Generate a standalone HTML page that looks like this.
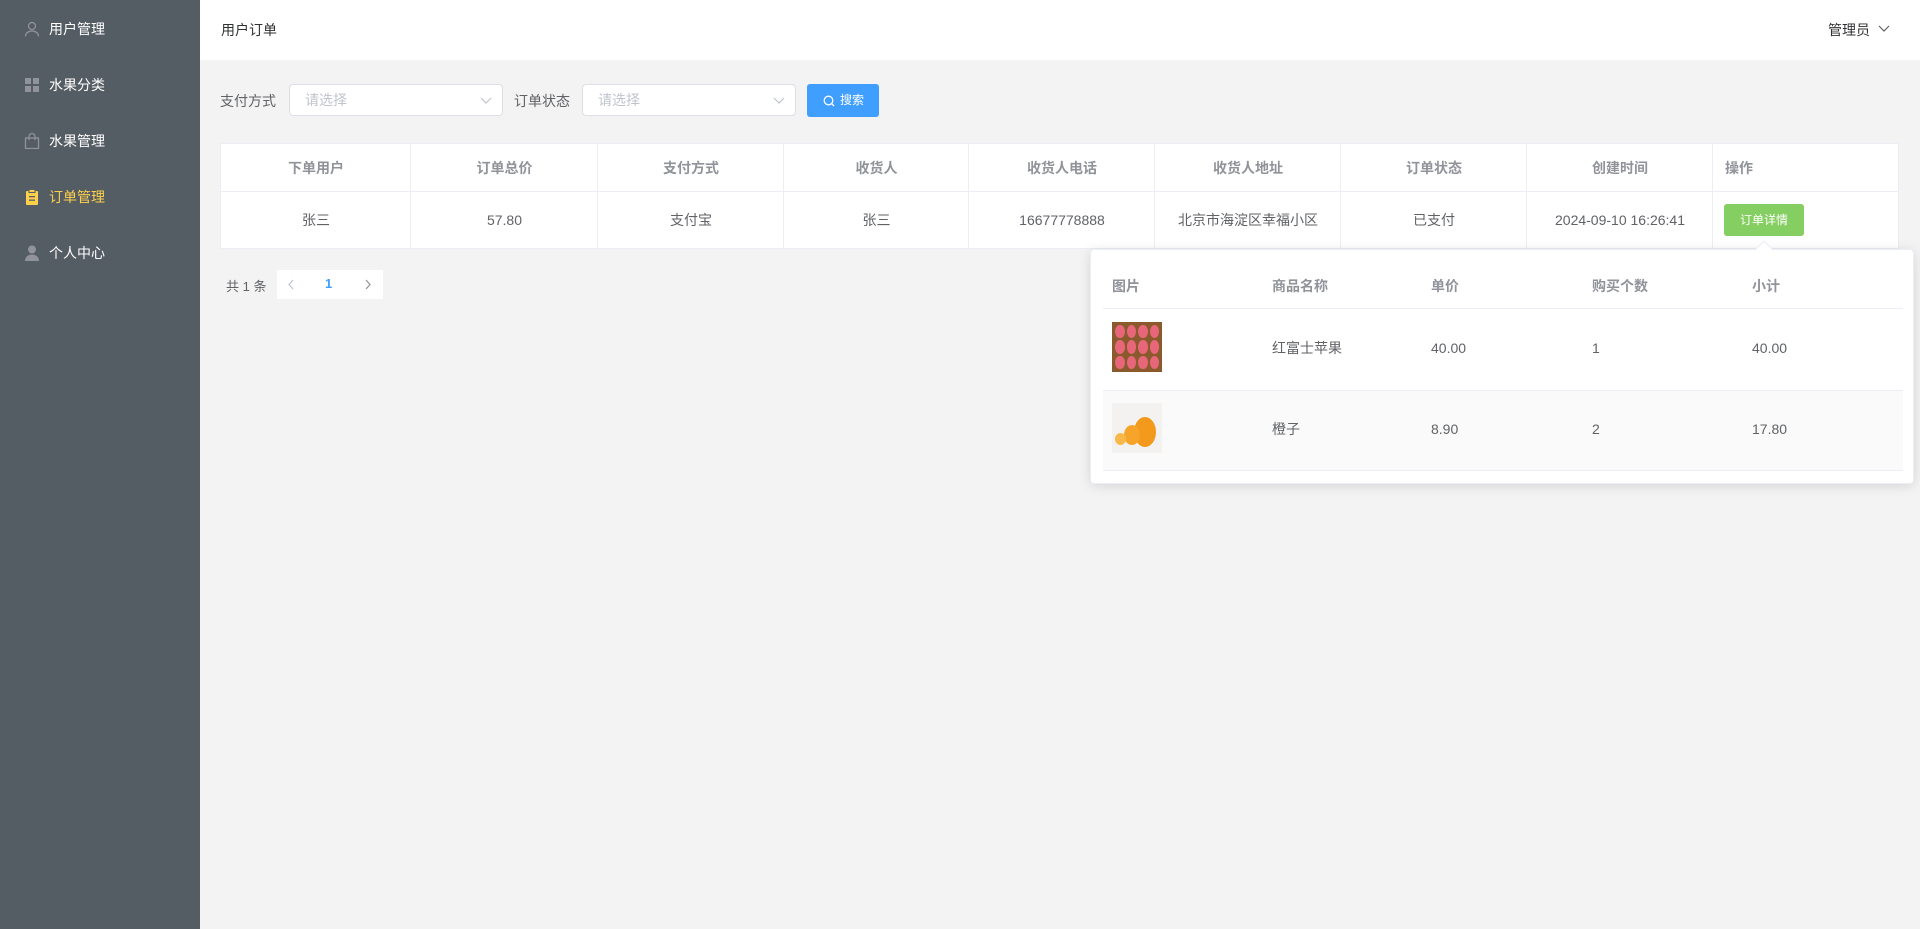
<!DOCTYPE html>
<html><head><meta charset="utf-8"><style>
*{box-sizing:border-box;margin:0;padding:0}
body{width:1920px;height:929px;overflow:hidden;background:#f3f3f3;font-family:"Liberation Sans","Noto Sans CJK SC",sans-serif;font-size:14px;color:#606266;position:relative}
.side{position:absolute;left:0;top:0;width:200px;height:929px;background:#545c64}
.mi{position:absolute;left:0;width:200px;height:56px;color:#fff;font-size:14px;line-height:56px;padding-left:49px}
.mi svg{position:absolute;left:24px;top:20px}
.hdr{position:absolute;left:200px;top:0;width:1720px;height:60px;background:#fff}
.abs{position:absolute}
.sel{position:absolute;top:84px;height:32px;background:#fff;border:1px solid #dcdfe6;border-radius:4px;color:#c0c4cc;font-size:14px;line-height:30px;padding-left:15px}
.sel svg{position:absolute;right:10px;top:11px}
.tbl{position:absolute;left:220px;top:143px;width:1679px;height:106px;background:#fff;border:1px solid #ebeef5}
.tbl .c{position:absolute;top:0;height:104px;border-right:1px solid #ebeef5}
.tbl .h{position:absolute;top:47px;left:0;width:1677px;border-top:1px solid #ebeef5}
.t{position:absolute;top:0;display:block;text-align:center;font-size:14px;line-height:20px;height:20px}
.pop span{display:block;line-height:20px;height:20px;top:0}
.pop{position:absolute;left:1090px;top:249px;width:824px;height:235px;background:#fff;border:1px solid #ebeef5;box-shadow:0 2px 12px rgba(0,0,0,.12);border-radius:4px}
</style></head><body>
<div class="side">
 <div class="mi" style="top:1px"><svg width="16" height="16" viewBox="0 0 16 16" fill="none" stroke="#909399" stroke-width="1.3"><circle cx="8" cy="5" r="3.5"/><path d="M1.5 15.5c0-3.5 3-5.5 6.5-5.5s6.5 2 6.5 5.5"/></svg>用户管理</div>
 <div class="mi" style="top:57px"><svg width="16" height="16" viewBox="0 0 16 16" fill="#909399"><rect x="1" y="1" width="6" height="6"/><rect x="9" y="1" width="6" height="6"/><rect x="1" y="9" width="6" height="6"/><rect x="9" y="9" width="6" height="6"/></svg>水果分类</div>
 <div class="mi" style="top:113px"><svg width="16" height="16" viewBox="0 0 16 16" fill="none" stroke="#909399" stroke-width="1.3"><rect x="1.5" y="5" width="13" height="10.5"/><path d="M5 7V3.5a3 3 0 0 1 6 0V7"/></svg>水果管理</div>
 <div class="mi" style="top:169px;color:#ffd04b"><svg width="16" height="16" viewBox="0 0 16 16"><rect x="2" y="2" width="12" height="14" rx="1" fill="#ffd04b"/><rect x="5" y="0.5" width="6" height="3" fill="#ffd04b" stroke="#545c64"/><rect x="5" y="7" width="6" height="1.3" fill="#545c64"/><rect x="5" y="10.5" width="6" height="1.3" fill="#545c64"/></svg>订单管理</div>
 <div class="mi" style="top:225px"><svg width="16" height="16" viewBox="0 0 16 16" fill="#909399"><circle cx="8" cy="4.5" r="4"/><path d="M1 16c0-4 3-6.5 7-6.5s7 2.5 7 6.5z"/></svg>个人中心</div>
</div>
<div class="hdr">
 <div class="abs" style="left:21px;top:20px;color:#303133">用户订单</div>
 <div class="abs" style="left:1628px;top:20px;color:#303133">管理员</div>
 <svg class="abs" style="left:1678px;top:24px" width="12" height="10" viewBox="0 0 12 10" fill="none" stroke="#606266" stroke-width="1.2"><path d="M1 2l5 5 5-5"/></svg>
</div>
<div class="abs" style="left:220px;top:91px;color:#606266">支付方式</div>
<div class="sel" style="left:289px;width:214px">请选择<svg width="12" height="10" viewBox="0 0 12 10" fill="none" stroke="#c0c4cc" stroke-width="1.2"><path d="M1 2l5 5 5-5"/></svg></div>
<div class="abs" style="left:514px;top:91px;color:#606266">订单状态</div>
<div class="sel" style="left:582px;width:214px">请选择<svg width="12" height="10" viewBox="0 0 12 10" fill="none" stroke="#c0c4cc" stroke-width="1.2"><path d="M1 2l5 5 5-5"/></svg></div>
<div class="abs" style="left:807px;top:84px;width:72px;height:33px;background:#409eff;border-radius:3px;color:#fff;font-size:12px;line-height:33px;padding-left:33px"><svg class="abs" style="left:16px;top:11px" width="12" height="12" viewBox="0 0 12 12" fill="none" stroke="#fff" stroke-width="1.3"><circle cx="5.5" cy="5.5" r="4.3"/><path d="M8.5 8.5l2.5 2.5"/></svg>搜索</div>
<div class="tbl">
 <div class="c" style="left:0;width:190px"></div><div class="c" style="left:190px;width:187px"></div><div class="c" style="left:377px;width:186px"></div><div class="c" style="left:563px;width:185px"></div><div class="c" style="left:748px;width:186px"></div><div class="c" style="left:934px;width:186px"></div><div class="c" style="left:1120px;width:186px"></div><div class="c" style="left:1306px;width:186px"></div>
 <div class="h"></div>
 <div style="position:absolute;top:14px;left:0;width:1677px;color:#909399;font-weight:bold">
  <span class="t" style="left:0;width:190px">下单用户</span><span class="t" style="left:190px;width:187px">订单总价</span><span class="t" style="left:377px;width:186px">支付方式</span><span class="t" style="left:563px;width:185px">收货人</span><span class="t" style="left:748px;width:186px">收货人电话</span><span class="t" style="left:934px;width:186px">收货人地址</span><span class="t" style="left:1120px;width:186px">订单状态</span><span class="t" style="left:1306px;width:186px">创建时间</span><span class="t" style="left:1504px;text-align:left">操作</span>
 </div>
 <div style="position:absolute;top:66px;left:0;width:1677px">
  <span class="t" style="left:0;width:190px">张三</span><span class="t" style="left:190px;width:187px">57.80</span><span class="t" style="left:377px;width:186px">支付宝</span><span class="t" style="left:563px;width:185px">张三</span><span class="t" style="left:748px;width:186px">16677778888</span><span class="t" style="left:934px;width:186px">北京市海淀区幸福小区</span><span class="t" style="left:1120px;width:186px">已支付</span><span class="t" style="left:1306px;width:186px">2024-09-10 16:26:41</span>
 </div>
 <div class="abs" style="left:1503px;top:60px;width:80px;height:32px;background:#85ce61;border-radius:3px;color:#fff;font-size:12px;line-height:32px;text-align:center">订单详情</div>
</div>
<div class="abs" style="left:226px;top:276px;color:#606266;font-size:13px">共 1 条</div>
<div class="abs" style="left:277px;top:270px;width:106px;height:29px;background:#fff"></div>
<svg class="abs" style="left:287px;top:279px" width="8" height="11" viewBox="0 0 8 11" fill="none" stroke="#c0c4cc" stroke-width="1.2"><path d="M6 1L2 5.5 6 10"/></svg>
<div class="abs" style="left:325px;top:276px;color:#409eff;font-weight:bold;font-size:13px">1</div>
<svg class="abs" style="left:364px;top:279px" width="8" height="11" viewBox="0 0 8 11" fill="none" stroke="#909399" stroke-width="1.2"><path d="M2 1l4 4.5L2 10"/></svg>
<div class="pop">
 <div class="abs" style="left:667px;top:-7px;width:12px;height:12px;background:#fff;transform:rotate(45deg);border-left:1px solid #ebeef5;border-top:1px solid #ebeef5"></div>
 <div class="abs" style="left:12px;top:58px;width:800px;border-top:1px solid #ebeef5"></div>
 <div class="abs" style="left:12px;top:140px;width:800px;height:81px;background:#fafafa;border-top:1px solid #ebeef5;border-bottom:1px solid #ebeef5"></div>
 <div class="abs" style="top:26px;left:0;width:824px;color:#909399;font-weight:bold">
  <span class="abs" style="left:21px">图片</span><span class="abs" style="left:181px">商品名称</span><span class="abs" style="left:340px">单价</span><span class="abs" style="left:501px">购买个数</span><span class="abs" style="left:661px">小计</span>
 </div>
 <div class="abs" style="left:21px;top:72px;width:50px;height:50px;background:#8a5a2c;display:grid;grid-template-columns:repeat(4,1fr);gap:2px;padding:3px">
  <i style="background:#e8667a;border-radius:50%"></i><i style="background:#e8667a;border-radius:50%"></i><i style="background:#e8667a;border-radius:50%"></i><i style="background:#e8667a;border-radius:50%"></i><i style="background:#e8667a;border-radius:50%"></i><i style="background:#e8667a;border-radius:50%"></i><i style="background:#e8667a;border-radius:50%"></i><i style="background:#e8667a;border-radius:50%"></i><i style="background:#e8667a;border-radius:50%"></i><i style="background:#e8667a;border-radius:50%"></i><i style="background:#e8667a;border-radius:50%"></i><i style="background:#e8667a;border-radius:50%"></i>
 </div>
 <div class="abs" style="left:21px;top:153px;width:50px;height:50px;background:#f4f2f0;overflow:hidden">
  <div class="abs" style="left:22px;top:14px;width:22px;height:30px;border-radius:50%;background:#f39a1c"></div>
  <div class="abs" style="left:12px;top:22px;width:16px;height:20px;border-radius:50%;background:#f7a42a"></div>
  <div class="abs" style="left:3px;top:30px;width:11px;height:12px;border-radius:50%;background:#f9b84a"></div>
 </div>
 <div class="abs" style="top:88px;left:0;width:824px;color:#606266">
  <span class="abs" style="left:181px">红富士苹果</span><span class="abs" style="left:340px">40.00</span><span class="abs" style="left:501px">1</span><span class="abs" style="left:661px">40.00</span>
 </div>
 <div class="abs" style="top:169px;left:0;width:824px;color:#606266">
  <span class="abs" style="left:181px">橙子</span><span class="abs" style="left:340px">8.90</span><span class="abs" style="left:501px">2</span><span class="abs" style="left:661px">17.80</span>
 </div>
</div>
</body></html>
